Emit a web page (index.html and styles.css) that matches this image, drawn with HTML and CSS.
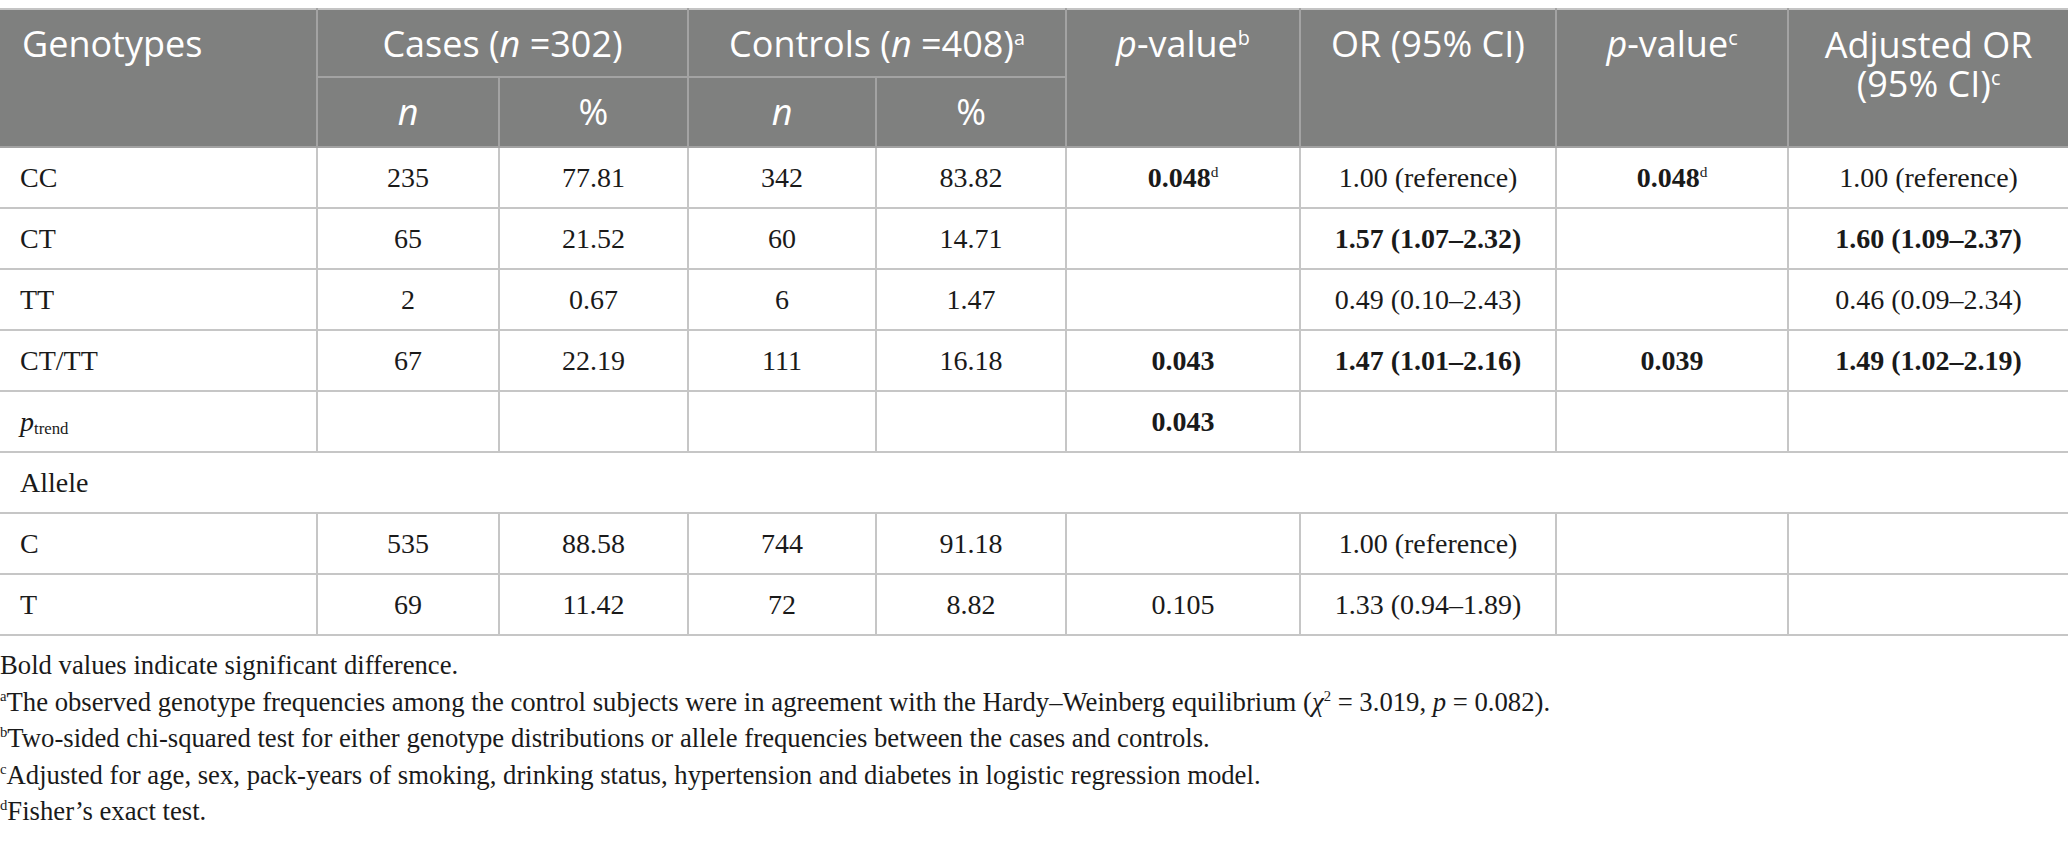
FILE: index.html
```html
<!DOCTYPE html>
<html>
<head>
<meta charset="utf-8">
<link rel="stylesheet" href="styles.css">
</head>
<body>
<table class="gt">
  <colgroup>
    <col class="c1"><col class="c2"><col class="c3"><col class="c4"><col class="c5"><col class="c6"><col class="c7"><col class="c8"><col class="c9">
  </colgroup>
  <thead>
    <tr class="hr1">
      <th rowspan="2" class="left">Genotypes</th>
      <th colspan="2">Cases (<i>n</i> =302)</th>
      <th colspan="2">Controls (<i>n</i> =408)<sup>a</sup></th>
      <th rowspan="2"><i>p</i>-value<sup>b</sup></th>
      <th rowspan="2">OR (95% CI)</th>
      <th rowspan="2"><i>p</i>-value<sup>c</sup></th>
      <th rowspan="2"><span class="line">Adjusted OR</span><span class="line">(95% CI)<sup>c</sup></span></th>
    </tr>
    <tr class="hr2">
      <th><i>n</i></th>
      <th>%</th>
      <th><i>n</i></th>
      <th>%</th>
    </tr>
  </thead>
  <tbody>
    <tr>
      <td class="left">CC</td><td>235</td><td>77.81</td><td>342</td><td>83.82</td>
      <td><b>0.048</b><sup>d</sup></td><td>1.00 (reference)</td><td><b>0.048</b><sup>d</sup></td><td>1.00 (reference)</td>
    </tr>
    <tr>
      <td class="left">CT</td><td>65</td><td>21.52</td><td>60</td><td>14.71</td>
      <td></td><td><b>1.57 (1.07–2.32)</b></td><td></td><td><b>1.60 (1.09–2.37)</b></td>
    </tr>
    <tr>
      <td class="left">TT</td><td>2</td><td>0.67</td><td>6</td><td>1.47</td>
      <td></td><td>0.49 (0.10–2.43)</td><td></td><td>0.46 (0.09–2.34)</td>
    </tr>
    <tr>
      <td class="left">CT/TT</td><td>67</td><td>22.19</td><td>111</td><td>16.18</td>
      <td><b>0.043</b></td><td><b>1.47 (1.01–2.16)</b></td><td><b>0.039</b></td><td><b>1.49 (1.02–2.19)</b></td>
    </tr>
    <tr>
      <td class="left"><i>p</i><sub>trend</sub></td><td></td><td></td><td></td><td></td>
      <td><b>0.043</b></td><td></td><td></td><td></td>
    </tr>
    <tr>
      <td class="left" colspan="9">Allele</td>
    </tr>
    <tr>
      <td class="left">C</td><td>535</td><td>88.58</td><td>744</td><td>91.18</td>
      <td></td><td>1.00 (reference)</td><td></td><td></td>
    </tr>
    <tr>
      <td class="left">T</td><td>69</td><td>11.42</td><td>72</td><td>8.82</td>
      <td>0.105</td><td>1.33 (0.94–1.89)</td><td></td><td></td>
    </tr>
  </tbody>
</table>
<div class="notes">
  <p>Bold values indicate significant difference.</p>
  <p><sup>a</sup>The observed genotype frequencies among the control subjects were in agreement with the Hardy–Weinberg equilibrium (<i>χ</i><sup>2</sup> = 3.019, <i>p</i> = 0.082).</p>
  <p><sup>b</sup>Two-sided chi-squared test for either genotype distributions or allele frequencies between the cases and controls.</p>
  <p><sup>c</sup>Adjusted for age, sex, pack-years of smoking, drinking status, hypertension and diabetes in logistic regression model.</p>
  <p><sup>d</sup>Fisher’s exact test.</p>
</div>
</body>
</html>
```
FILE: styles.css
```css
html, body {
  margin: 0;
  padding: 0;
  background: #ffffff;
}

body {
  padding-top: 8px;
  font-family: "Liberation Serif", "Times New Roman", serif;
  color: #1a1a1a;
}

.gt {
  width: 2068px;
  table-layout: fixed;
  border-collapse: collapse;
  border-top: 2px solid #c4c4c4;
  border-bottom: 2px solid #c4c4c4;
}

.c1 { width: 317px; }
.c2 { width: 182px; }
.c3 { width: 189px; }
.c4 { width: 188px; }
.c5 { width: 190px; }
.c6 { width: 234px; }
.c7 { width: 256px; }
.c8 { width: 232px; }
.c9 { width: 280px; }

.gt th {
  background: #7f807f;
  color: #ffffff;
  font-family: "Open Sans", "Noto Sans", sans-serif;
  font-weight: 400;
  font-size: 36px;
  line-height: 38px;
  text-align: center;
  vertical-align: top;
  padding: 15px 10px 0 10px;
  border: 2px solid #a3a3a3;
}

.gt .hr1 th {
  border-top: none;
  height: 50.5px;
}

.gt .hr2 th {
  height: 53.5px;
}

.gt th .line {
  display: block;
  line-height: 39px;
}

.gt th sup {
  font-size: 0.55em;
  vertical-align: 0.6em;
  line-height: 0;
}

.gt td {
  font-size: 28px;
  line-height: 32px;
  height: 59px;
  padding: 0 10px;
  text-align: center;
  vertical-align: middle;
  border: 2px solid #c6c6c6;
}

.gt th:first-child, .gt td:first-child {
  border-left: none;
}

.gt th:last-child, .gt td:last-child {
  border-right: none;
}

.gt .left {
  text-align: left;
  padding-left: 20px;
}

.gt th.left {
  padding-left: 22px;
}

.gt td sup {
  font-size: 0.55em;
  vertical-align: 0.65em;
  line-height: 0;
}

.gt td sub {
  font-size: 0.6em;
  vertical-align: -0.2em;
  line-height: 0;
}

.gt td b {
  font-weight: 700;
}

.notes {
  margin-top: 11px;
  font-size: 26.7px;
  line-height: 36.6px;
}

.notes p {
  margin: 0;
  white-space: nowrap;
}

.notes sup {
  font-size: 0.55em;
  vertical-align: 0.7em;
  line-height: 0;
}
```
